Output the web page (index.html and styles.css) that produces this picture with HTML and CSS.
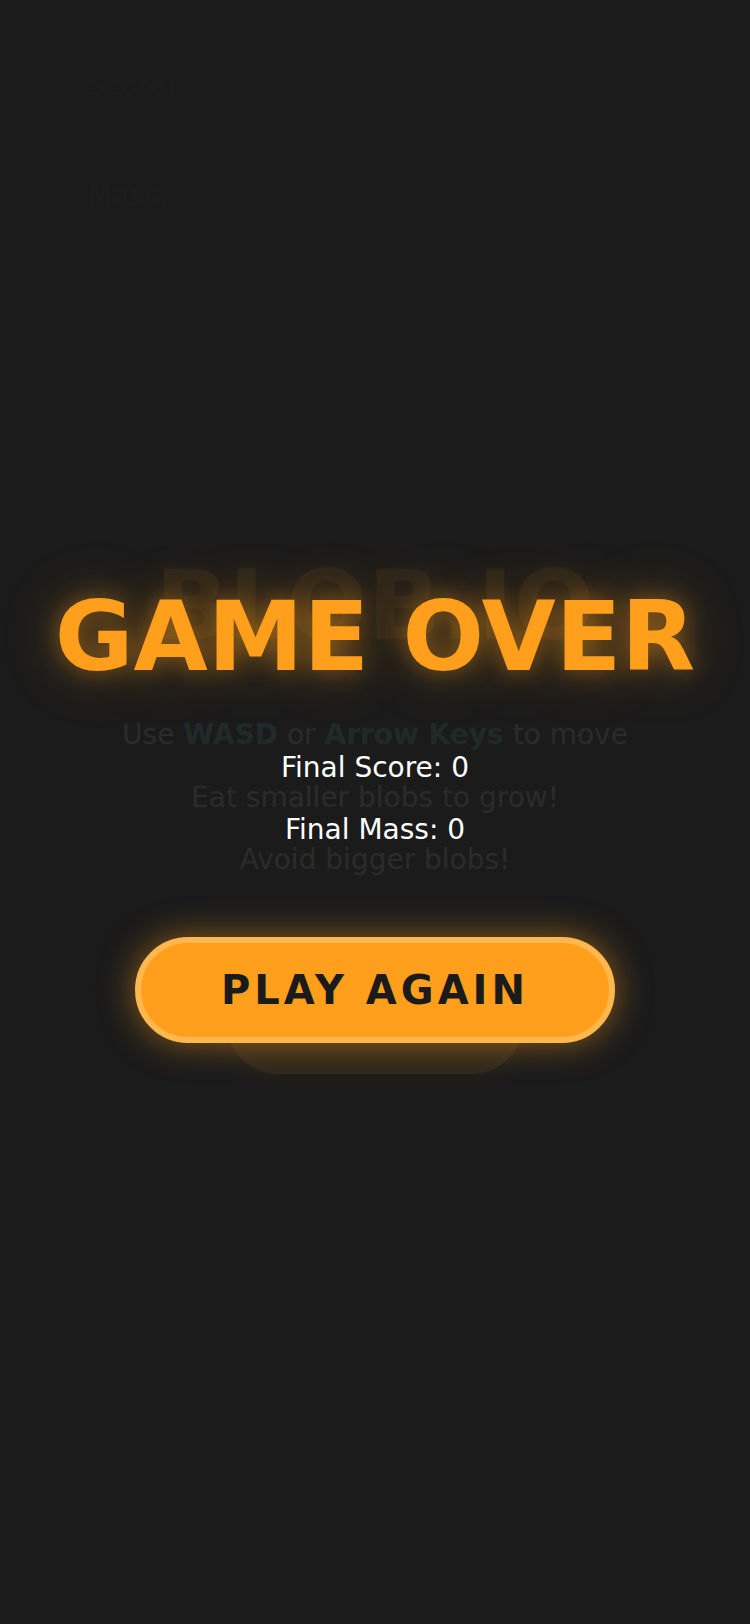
FILE: index.html
```html
<!DOCTYPE html>
<html lang="en">
<head>
    <meta charset="UTF-8">
    <meta name="viewport" content="width=device-width, initial-scale=1.0">
    <title>Blob.io</title>
    <link rel="stylesheet" href="styles.css">
</head>
<body>

    <div class="game">
        <div class="hud">
            <div class="hud-item">Score: <span id="score"></span></div>
            <div class="hud-item">Mass: <span id="mass"></span></div>
        </div>

        <div class="screen start-screen">
            <h1 class="title">BLOB.IO</h1>
            <p class="info">Use <b>WASD</b> or <b>Arrow Keys</b> to move</p>
            <p class="info">Eat smaller blobs to grow!</p>
            <p class="info">Avoid bigger blobs!</p>
            <button class="button">PLAY</button>
        </div>

        <div class="screen game-over">
            <h1 class="title">GAME OVER</h1>
            <p class="stat">Final Score: <span id="finalScore">0</span></p>
            <p class="stat">Final Mass: <span id="finalMass">0</span></p>
            <button class="button">PLAY AGAIN</button>
        </div>
    </div>

</body>
</html>
```

FILE: styles.css
```css
body {
    margin: 0;
    height: 100vh;
    overflow: hidden;
    background-color: #1b1b1b;
    color: #fff;
    font-family: "DejaVu Sans", sans-serif;
}
.game {
    position: relative;
    height: 100vh;
}
.hud {
    display: flex;
    flex-direction: column;
    gap: 77px;
    padding: 69px 0 0 88px;
    font-size: 28px;
    color: #aaa;
}
.screen {
    position: absolute;
    inset: 0;
    display: flex;
    flex-direction: column;
    align-items: center;
    justify-content: center;
    text-align: center;
}
.start-screen {
    background-color: rgba(27, 27, 27, 0.8);
}
.game-over {
    background-color: rgba(27, 27, 27, 0.92);
}
.title {
    margin: 0 0 56px;
    font-size: 96px;
    font-weight: bold;
    color: #ff9f1c;
    text-shadow: 0 0 25px rgba(255, 159, 28, 0.45), 0 0 60px rgba(255, 159, 28, 0.3);
}
.game-over .title {
    margin-bottom: 58px;
}
.info,
.stat {
    margin: 0;
    font-size: 28px;
}
.info + .info,
.stat + .stat {
    margin-top: 29.4px;
}
.info {
    color: #e0e0e0;
}
.info b {
    color: #4fd1c5;
}
.button {
    margin-top: 92px;
    padding: 24px 80px;
    border: 6px solid #ffb84d;
    border-radius: 60px;
    background-color: #ff9f1c;
    color: #1b1b1b;
    font-family: inherit;
    font-size: 40px;
    font-weight: bold;
    letter-spacing: 4px;
    cursor: pointer;
    box-shadow: 0 0 35px rgba(255, 159, 28, 0.5);
}
.game-over .button {
    margin-top: 91px;
}
```
